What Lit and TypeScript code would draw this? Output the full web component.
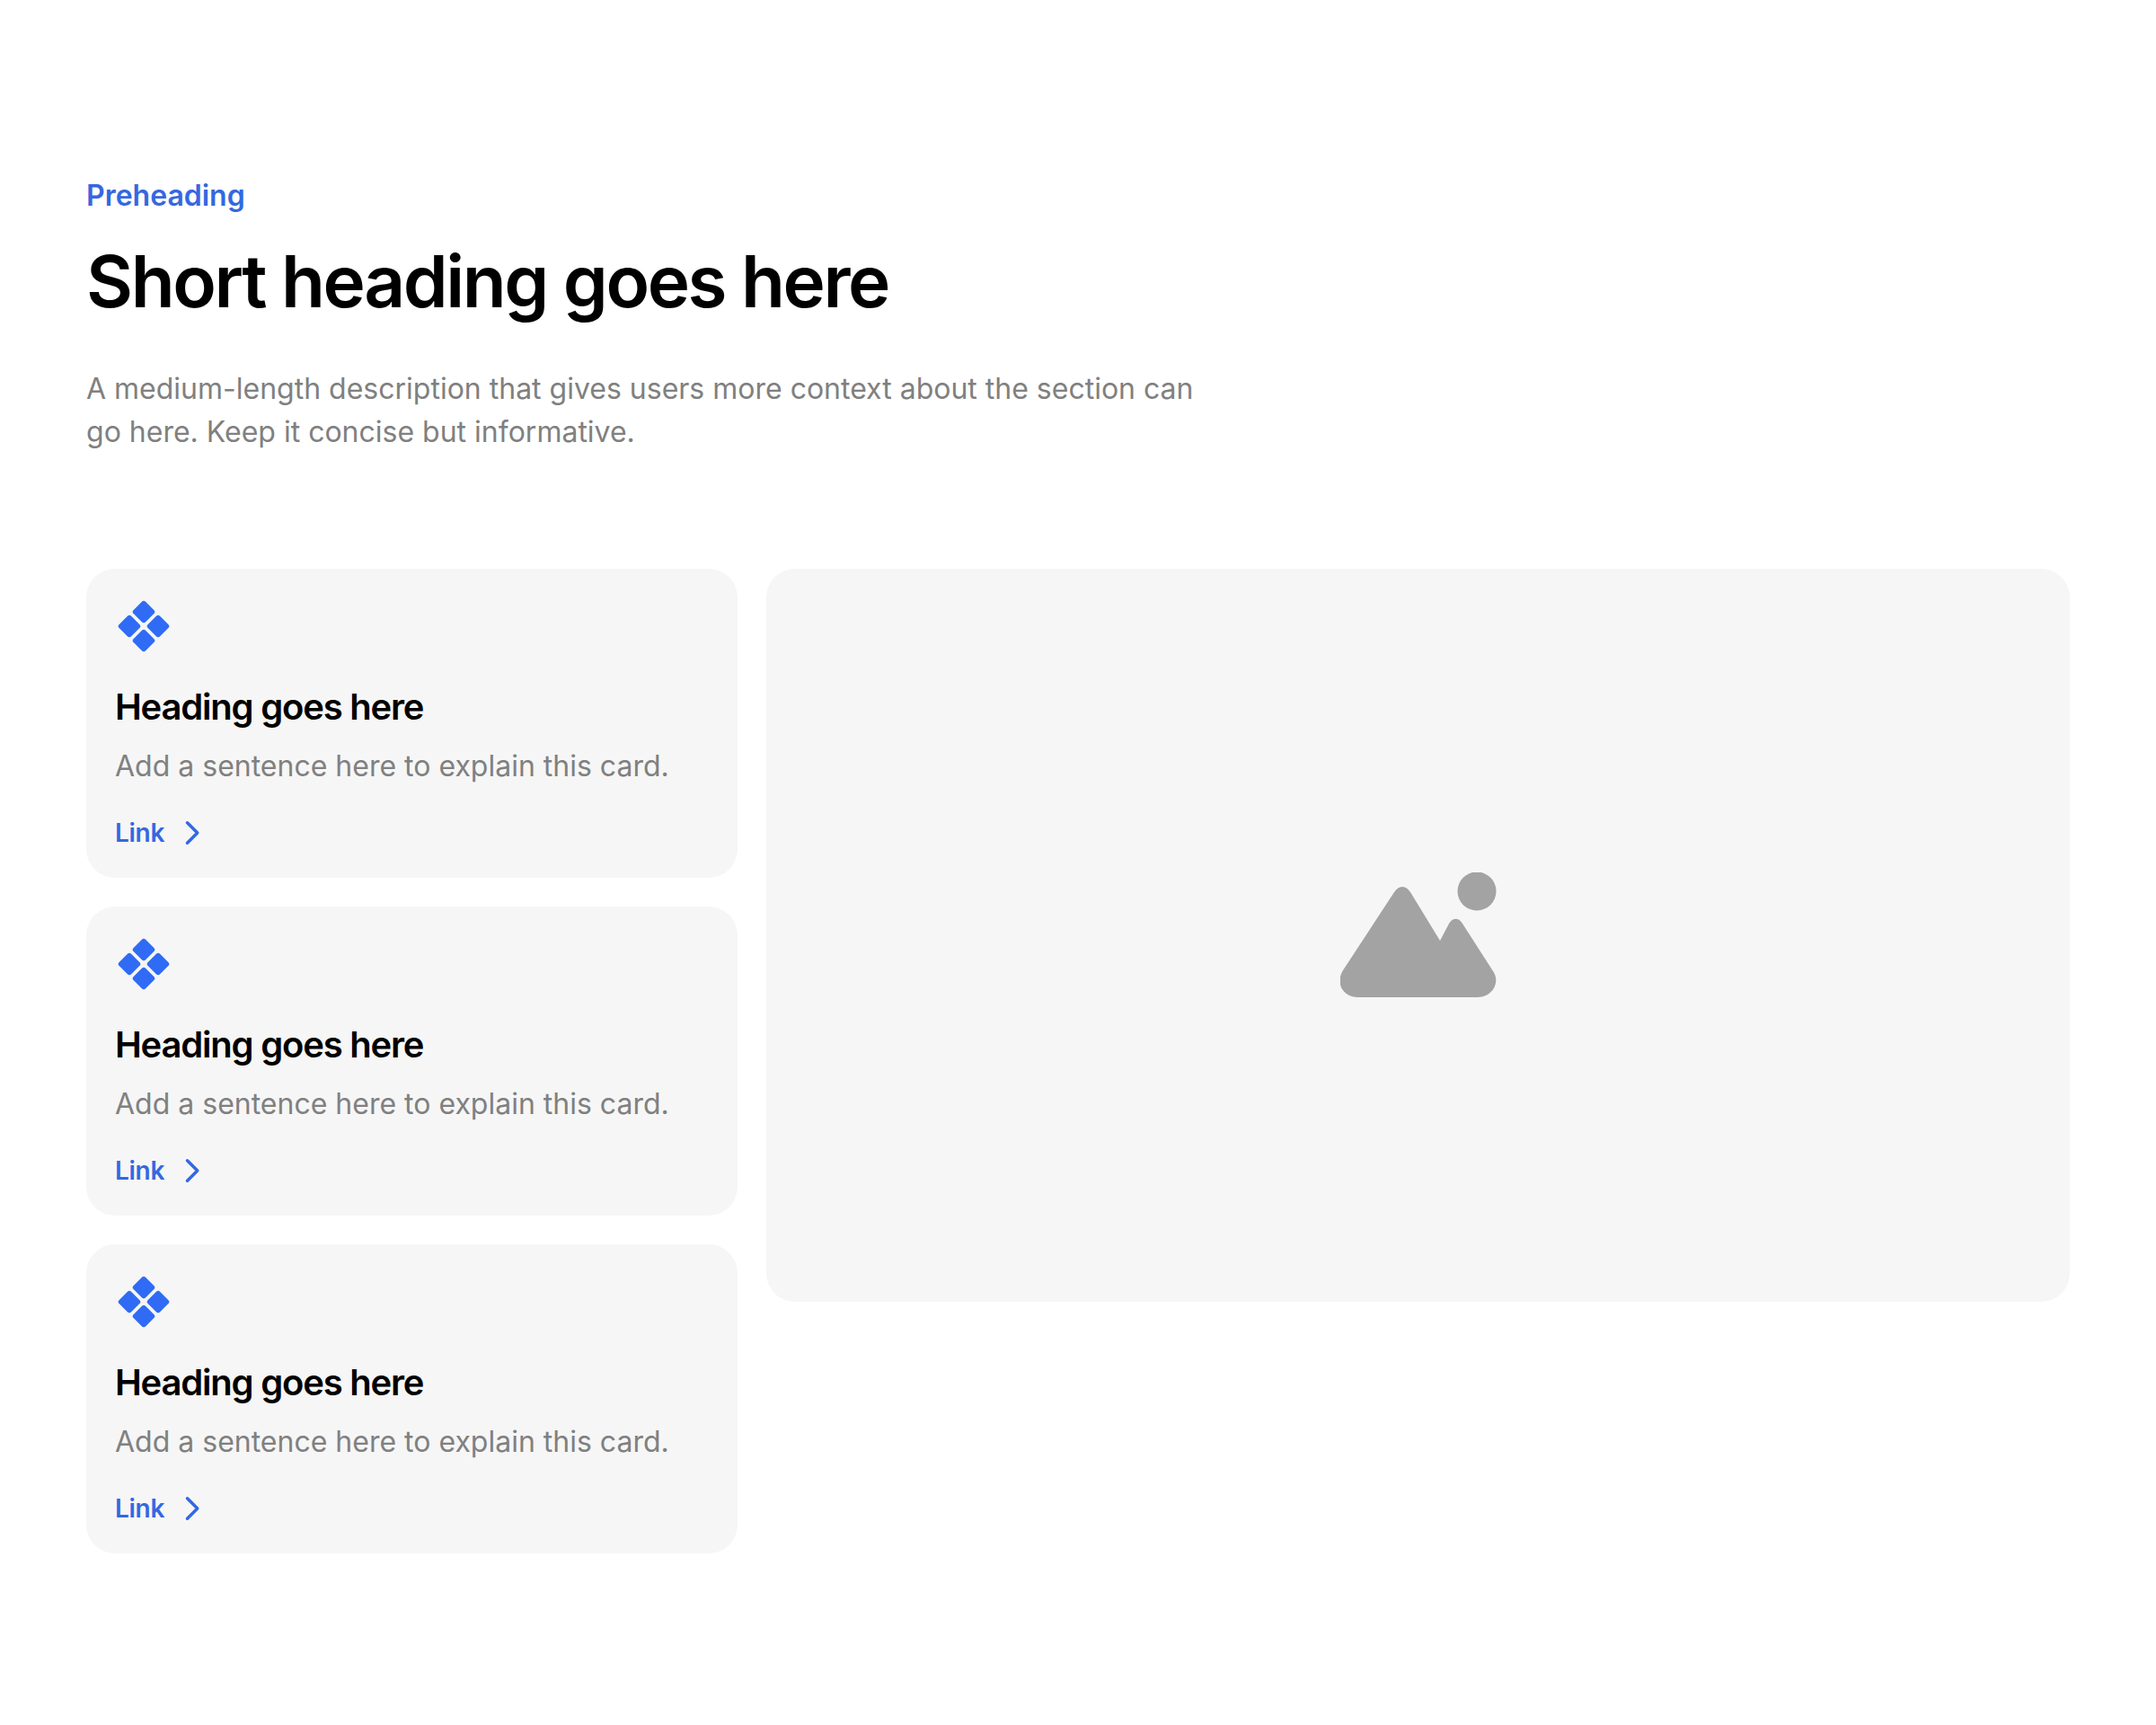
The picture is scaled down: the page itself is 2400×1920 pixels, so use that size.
import { LitElement, html, css } from "lit";
import { customElement } from "lit/decorators.js";

@customElement("app-root")
export class AppRoot extends LitElement {
  static styles = css`
    :host { display: block; font-family: Inter, "Liberation Sans", sans-serif; background: #fff; min-height: 1920px; }
    .page { padding: 192px 96px 0; display: flex; flex-direction: column; }
    .pre { font-size: 32px; line-height: 52px; font-weight: 600; color: #3468e0; }
    h1 { margin: 15px 0 0; font-size: 80px; line-height: 108px; font-weight: 600; letter-spacing: -0.03em; color: #000; }
    .desc { margin: 42px 0 0; font-size: 32px; line-height: 48px; color: #808080; max-width: 1280px; }
    .grid { margin-top: 128px; display: grid; grid-template-columns: 1fr 2fr; gap: 32px; align-items: start; }
    .cards { display: flex; flex-direction: column; gap: 32px; }
    .card { background: #f6f6f6; border-radius: 32px; padding: 31px 32px 29px; display: flex; flex-direction: column; }
    .icon { width: 64px; height: 64px; display: block; }
    h3 { margin: 29px 0 0; font-size: 40px; line-height: 60px; font-weight: 600; letter-spacing: -0.03em; color: #000; }
    .text { margin: 12px 0 0; font-size: 32px; line-height: 48px; color: #808080; }
    .link { margin-top: 29px; display: flex; align-items: center; gap: 16px; font-size: 28px; line-height: 42px; font-weight: 600; letter-spacing: -0.01em; color: #3468e0; }
    .chev { width: 32px; height: 32px; display: block; }
    .media { height: 816px; background: #f6f6f6; border-radius: 32px; display: flex; align-items: center; justify-content: center; }
    .mount { width: 174px; height: 140px; display: block; }
  `;

  card() {
    return html`<div class="card">
      <svg class="icon" viewBox="0 0 64 64" fill="#2f6bf5">
        <rect x="22.5" y="7.5" width="19" height="19" rx="3" transform="rotate(45 32 17)" />
        <rect x="6.5" y="23.5" width="19" height="19" rx="3" transform="rotate(45 16 33)" />
        <rect x="38.5" y="23.5" width="19" height="19" rx="3" transform="rotate(45 48 33)" />
        <rect x="22.5" y="39.5" width="19" height="19" rx="3" transform="rotate(45 32 49)" />
      </svg>
      <h3>Heading goes here</h3>
      <p class="text">Add a sentence here to explain this card.</p>
      <div class="link">
        <span>Link</span>
        <svg class="chev" viewBox="0 0 32 32" fill="none" stroke="#3468e0" stroke-width="3.5" stroke-linecap="round" stroke-linejoin="round"><path d="M9.5 4.75 L20.75 16 L9.5 27.25" /></svg>
      </div>
    </div>`;
  }

  render() {
    return html`<div class="page">
      <div class="pre">Preheading</div>
      <h1>Short heading goes here</h1>
      <p class="desc">A medium-length description that gives users more context about the section can go here. Keep it concise but informative.</p>
      <div class="grid">
        <div class="cards">${this.card()}${this.card()}${this.card()}</div>
        <div class="media">
          <svg class="mount" viewBox="1 1 174 140" fill="#a3a3a3">
            <circle cx="153" cy="22" r="21.5" />
            <path d="M21 140 H154 C170 140 179 124 171.7 112 L137 58 C133 51 126 51 122 58 L112 77 L79 23 C74 15 66 15 61 23 L4 110 C-5 124 4 140 21 140 Z" />
          </svg>
        </div>
      </div>
    </div>`;
  }
}
